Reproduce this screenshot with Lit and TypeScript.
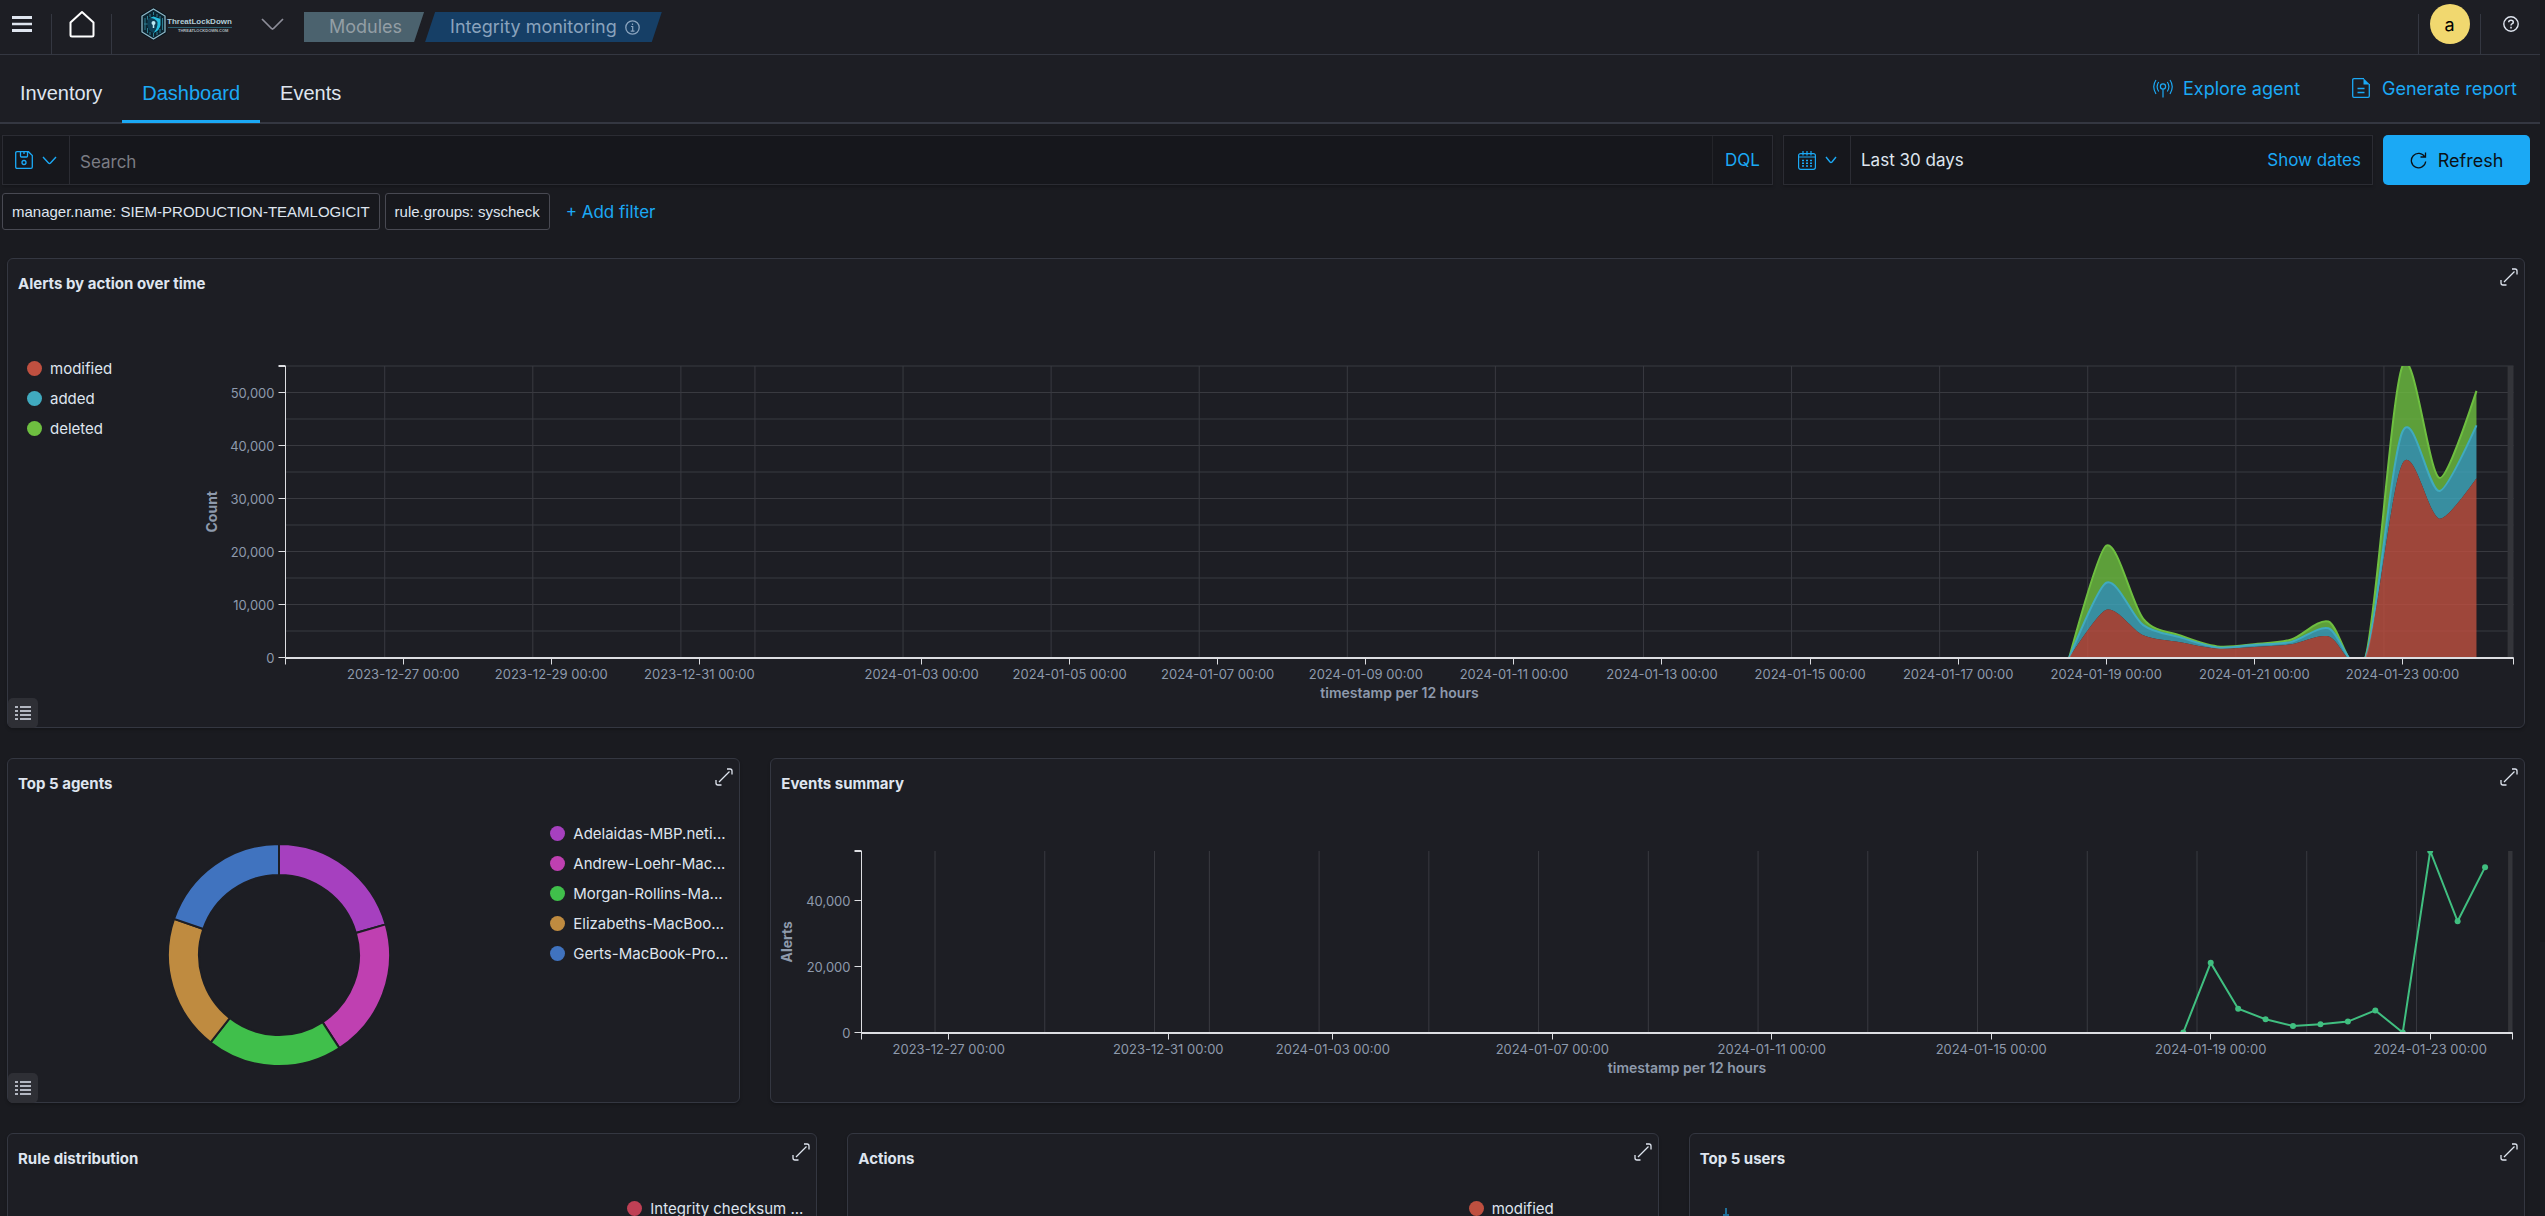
import { LitElement, html, svg, css, nothing } from "lit";
import { customElement, property, state } from "lit/decorators.js";

interface Tick {
  at: number;
  label: string;
}

interface Series {
  color: string;
  values: number[];
}

type Point = [number, number];

const DAY_MIN = -1.59;
const DAY_MAX = 28.5;
const PARTIAL_FROM = 28.42;
const MAX_COUNT = 55000;

/* Days are counted from 2023-12-27; one bucket every half day. */
const FIRST_BUCKET = 22.5;
const GRID_DAYS = [-0.25, 1.75, 3.75, ...Array.from({ length: 12 }, (_, i) => 4.75 + 2 * i)];

const dayLabel = (day: number): string => {
  const date = new Date(Date.UTC(2023, 11, 27 + day));
  return `${date.toISOString().slice(0, 10)} 00:00`;
};

const countLabel = (value: number): string => value.toLocaleString("en-US");

const ticksOf = (days: number[]): Tick[] => days.map((at) => ({ at, label: dayLabel(at) }));

/* Cardinal spline with tension 0.7. */
const cardinal = (p: Point[]): string => {
  const last = p.length - 1;
  const k = 0.15;
  const tangent = (i: number): Point => [k * (p[i + 1][0] - p[i - 1][0]), k * (p[i + 1][1] - p[i - 1][1])];
  let d = `M${p[0][0]},${p[0][1]}`;
  const first = tangent(1);
  d += `Q${p[1][0] - (first[0] * 2) / 3},${p[1][1] - (first[1] * 2) / 3} ${p[1][0]},${p[1][1]}`;
  for (let i = 1; i < last - 1; i++) {
    const a = tangent(i);
    const b = tangent(i + 1);
    d += `C${p[i][0] + a[0]},${p[i][1] + a[1]} ${p[i + 1][0] - b[0]},${p[i + 1][1] - b[1]} ${p[i + 1][0]},${p[i + 1][1]}`;
  }
  const end = tangent(last - 1);
  d += `Q${p[last - 1][0] + (end[0] * 2) / 3},${p[last - 1][1] + (end[1] * 2) / 3} ${p[last][0]},${p[last][1]}`;
  return d;
};

@customElement("time-chart")
export class TimeChart extends LitElement {
  @property() kind: "area" | "line" = "area";
  @property() valueTitle = "";
  @property({ type: Number }) height = 360;
  @property({ type: Number }) plotLeft = 85.5;
  @property({ type: Number }) plotRight = 10.5;
  @property({ type: Number }) plotTop = 16;
  @property({ type: Number }) plotBottom = 307.5;
  @property({ type: Number }) titleX = 11;
  @property({ type: Number }) valueStep = 10000;
  @property({ attribute: false }) ticks: Tick[] = [];
  @property({ attribute: false }) series: Series[] = [];
  @state() private width = 0;

  private observer = new ResizeObserver((entries) => {
    this.width = Math.round(entries[0].contentRect.width);
  });

  static styles = css`
    :host {
      display: block;
      min-width: 0;
      font-family: Inter, "Open Sans", sans-serif;
    }
    svg {
      display: block;
    }
    .grid {
      stroke: #393a40;
      stroke-width: 1;
      fill: none;
    }
    .axis {
      stroke: #dddee2;
      fill: none;
    }
    .thin {
      stroke-width: 1;
    }
    .thick {
      stroke-width: 2;
    }
    .label {
      font-size: 13px;
      fill: #8e9aac;
    }
    .title {
      font-size: 14px;
      font-weight: 600;
      fill: #8e9aac;
    }
    .side {
      font-weight: 700;
    }
    .partial {
      fill: #34353a;
    }
  `;

  connectedCallback() {
    super.connectedCallback();
    this.observer.observe(this);
  }

  disconnectedCallback() {
    this.observer.disconnect();
    super.disconnectedCallback();
  }

  private x(day: number): number {
    const span = this.width - this.plotRight - this.plotLeft;
    return this.plotLeft + ((day - DAY_MIN) / (DAY_MAX - DAY_MIN)) * span;
  }

  private y(value: number): number {
    return this.plotBottom - (value / MAX_COUNT) * (this.plotBottom - this.plotTop);
  }

  private points(values: number[]): Point[] {
    return values.map((v, i) => [this.x(FIRST_BUCKET + i / 2), this.y(v)]);
  }

  private renderArea() {
    return [...this.series].reverse().map((s, i, all) => {
      const pts = this.points(s.values);
      const lower = all[i + 1];
      const top = cardinal(pts);
      const end = pts[pts.length - 1];
      const under = lower
        ? "L" + cardinal([...this.points(lower.values)].reverse()).slice(1)
        : `L${end[0]},${this.plotBottom}L${pts[0][0]},${this.plotBottom}`;
      return svg`
        <path d=${top + under + "Z"} fill=${s.color} fill-opacity="0.8"></path>
        <path d=${top} fill="none" stroke=${s.color} stroke-width=${lower ? 2 : 0}></path>`;
    });
  }

  private renderLine() {
    return this.series.map((s) => {
      const pts = this.points(s.values);
      return svg`
        <polyline points=${pts.map((p) => p.join(",")).join(" ")} fill="none" stroke=${s.color} stroke-width="2"></polyline>
        ${pts.map((p) => svg`<circle cx=${p[0]} cy=${p[1]} r="3" fill=${s.color}></circle>`)}`;
    });
  }

  render() {
    if (!this.width) return nothing;
    const right = this.width - this.plotRight;
    const left = this.plotLeft;
    const bottom = this.plotBottom;
    const values: number[] = [];
    for (let v = 0; v <= MAX_COUNT; v += this.valueStep) values.push(v);
    const middle = (this.plotTop + bottom) / 2;
    return html`
      <svg width=${this.width} height=${this.height} role="img" aria-label="${this.valueTitle} by timestamp per 12 hours">
        <defs>
          <clipPath id="plot">
            <rect x=${left} y=${this.plotTop} width=${right - left} height=${bottom - this.plotTop}></rect>
          </clipPath>
        </defs>
        ${this.kind === "area"
          ? Array.from({ length: 11 }, (_, i) => this.y((i + 1) * 5000)).map(
              (y) => svg`<path class="grid" d="M${left},${y}H${right}"></path>`
            )
          : nothing}
        ${GRID_DAYS.map((d) => svg`<path class="grid" d="M${this.x(d)},${this.plotTop}V${bottom}"></path>`)}
        <rect class="partial" x=${this.x(PARTIAL_FROM)} y=${this.plotTop} width=${right - this.x(PARTIAL_FROM)} height=${bottom - this.plotTop}></rect>
        <g clip-path="url(#plot)">${this.kind === "area" ? this.renderArea() : this.renderLine()}</g>
        <path class="axis thin" d="M${left},${this.plotTop}V${bottom + 7}"></path>
        <path class="axis thick" d="M${left - 7},${this.plotTop}H${left}"></path>
        <path class="axis thick" d="M${left},${Math.ceil(bottom)}H${right}"></path>
        <path class="axis thin" d="M${right},${bottom}v7"></path>
        ${values.map(
          (v) => svg`
            <path class="axis thin" d="M${left - 7},${Math.floor(this.y(v)) + 0.5}H${left}"></path>
            <text class="label" x=${left - 11} y=${this.y(v)} text-anchor="end" dominant-baseline="central">${countLabel(v)}</text>`
        )}
        ${this.ticks.map(
          (t) => svg`
            <path class="axis thin" d="M${Math.floor(this.x(t.at)) + 0.5},${bottom}v7"></path>
            <text class="label" x=${this.x(t.at)} y=${bottom + 16} text-anchor="middle" dominant-baseline="central">${t.label}</text>`
        )}
        <text class="title" x=${(left + right) / 2} y=${bottom + 35} text-anchor="middle" dominant-baseline="central">timestamp per 12 hours</text>
        <text class="title side" transform="translate(${this.titleX},${middle}) rotate(-90)" text-anchor="middle" dominant-baseline="central">${this.valueTitle}</text>
      </svg>
    `;
  }
}

interface LegendItem {
  label: string;
  color: string;
}

const ACTIONS: LegendItem[] = [
  { label: "modified", color: "#bf5040" },
  { label: "added", color: "#40aabf" },
  { label: "deleted", color: "#6ebf40" },
];

const ACTION_SERIES: Series[] = [
  { color: "#bf5040", values: [0, 9000, 4200, 2900, 1700, 2000, 2500, 4000, 0, 36600, 26200, 33800] },
  { color: "#40aabf", values: [0, 14100, 6100, 3800, 1900, 2400, 2950, 5500, 0, 42600, 31400, 43800] },
  { color: "#6ebf40", values: [0, 21100, 7300, 4150, 2100, 2500, 3400, 6800, 0, 55000, 33900, 50300] },
];

const EVENT_SERIES: Series[] = [
  { color: "#40bf80", values: [0, 21100, 7200, 4000, 2000, 2500, 3300, 6700, 0, 55000, 33700, 50100] },
];

const AGENTS: (LegendItem & { until: number })[] = [
  { label: "Adelaidas-MBP.neti...", color: "#a640bf", until: 74 },
  { label: "Andrew-Loehr-Mac...", color: "#bf40b1", until: 147 },
  { label: "Morgan-Rollins-Ma...", color: "#40bf4b", until: 218 },
  { label: "Elizabeths-MacBoo...", color: "#bf8b40", until: 289 },
  { label: "Gerts-MacBook-Pro...", color: "#4073bf", until: 360 },
];

const slice = (from: number, to: number): string => {
  const at = (deg: number, r: number) => {
    const a = ((deg - 90) * Math.PI) / 180;
    return `${(111 + r * Math.cos(a)).toFixed(2)},${(111 + r * Math.sin(a)).toFixed(2)}`;
  };
  return `M${at(from, 111)}A111,111 0 0 1 ${at(to, 111)}L${at(to, 80)}A80,80 0 0 0 ${at(from, 80)}Z`;
};

const chevron = (w: number, h: number) => html`
  <svg class="stroke" width=${w} height=${h} viewBox="0 0 ${w} ${h}" aria-hidden="true">
    <path d="M1,1L${w / 2 - 1},${h - 2}Q${w / 2},${h - 1} ${w / 2 + 1},${h - 2}L${w - 1},1" stroke-width="1.4"></path>
  </svg>
`;

@customElement("app-root")
export class AppRoot extends LitElement {
  static styles = css`
    :host {
      display: flex;
      height: 100vh;
      overflow: hidden;
      background: #1a1b20;
      color: #dfe5ef;
      font-family: Inter, "Open Sans", sans-serif;
      font-size: 15px;
    }
    * {
      box-sizing: border-box;
    }
    button,
    input {
      font: inherit;
      color: inherit;
      background: none;
      border: 0;
      padding: 0;
      margin: 0;
    }
    button {
      cursor: pointer;
      display: flex;
      align-items: center;
    }
    a {
      color: inherit;
      text-decoration: none;
    }
    svg {
      display: block;
      flex: none;
    }
    .stroke {
      fill: none;
      stroke: currentColor;
    }
    .page {
      flex: 1;
      min-width: 0;
    }
    .scroll {
      flex: 0 0 5px;
    }
    .thumb {
      height: 77.5%;
      background: #17181c;
    }

    .header {
      display: flex;
      align-items: flex-start;
      height: 55px;
      background: #1d1e24;
      border-bottom: 1px solid #343741;
    }
    .cell {
      height: 40px;
      margin-top: 14px;
      border-right: 1px solid #343741;
      display: flex;
      justify-content: center;
    }
    .menu {
      width: 52px;
      padding-right: 7px;
      color: #dfe5ef;
    }
    .menu button {
      height: 20px;
    }
    .home {
      width: 60px;
      color: #ffffff;
    }
    .home a {
      margin-top: -4px;
    }
    .logo {
      display: flex;
      margin: 7px 0 0 28px;
    }
    .logo-name {
      font: 700 8px "Liberation Sans", sans-serif;
      fill: #b4cdd8;
    }
    .logo-site {
      font: 700 4px "Liberation Sans", sans-serif;
      fill: #b0b8be;
    }
    .spaces {
      margin: 18px 0 0 28px;
      color: #8d8d99;
    }
    .crumbs {
      display: flex;
      gap: 1px;
      margin: 12px 0 0 20px;
      padding: 0;
      list-style: none;
      font-size: 18px;
      line-height: 30px;
    }
    .crumb {
      display: flex;
      align-items: center;
      gap: 8px;
      height: 30px;
      padding: 0 22px 0 25px;
    }
    .crumb svg {
      margin-top: 1px;
    }
    .crumb-first {
      background: #4b626e;
      color: #939ea5;
      clip-path: polygon(0 0, 100% 0, calc(100% - 10px) 100%, 0 100%);
    }
    .crumb-last {
      background: #163f66;
      color: #8aa3bd;
      clip-path: polygon(10px 0, 100% 0, calc(100% - 10px) 100%, 0 100%);
    }
    .account {
      margin-left: auto;
      width: 63px;
      border-left: 1px solid #343741;
    }
    .avatar {
      width: 40px;
      height: 40px;
      margin-top: -10px;
      border-radius: 50%;
      background: #f1d86f;
      color: #000000;
      font-size: 18px;
      justify-content: center;
    }
    .help {
      width: 59px;
      height: 48px;
      justify-content: center;
    }

    .nav {
      display: flex;
      justify-content: space-between;
      height: 69px;
      padding-top: 8px;
      background: #1d1e24;
      box-shadow: inset 0 -2px #343741;
    }
    .tabs {
      display: flex;
    }
    .tab {
      height: 60px;
      padding: 3px 20px 0;
      border-bottom: 3px solid transparent;
      font: 20px "Liberation Sans", Arial, sans-serif;
    }
    .tab-on {
      color: #1ba9f5;
      border-bottom-color: #1ba9f5;
    }
    .links {
      display: flex;
      gap: 52px;
      height: 50px;
      padding-right: 23px;
      color: #1ba9f5;
      font-size: 18px;
    }
    .link {
      display: flex;
      align-items: center;
      gap: 10px;
    }

    .query {
      display: flex;
      gap: 10px;
      height: 61px;
      padding: 11px 10px 0 2px;
      font-size: 17px;
    }
    .box {
      display: flex;
      background: #16171c;
      border: 1px solid #2b2c33;
      box-shadow: 0 2px 3px #00000033;
    }
    .search {
      flex: 1;
      min-width: 0;
    }
    .dates {
      flex: 0 1 590px;
    }
    .picker {
      justify-content: center;
      gap: 9px;
      width: 67px;
      color: #1ba9f5;
      border-right: 1px solid #2b2c33;
    }
    .search input {
      flex: 1;
      min-width: 0;
      padding: 4px 10px 0;
      outline: none;
    }
    .search input::placeholder {
      color: #7b7c84;
      opacity: 1;
    }
    .language {
      width: 60px;
      justify-content: center;
      color: #1ba9f5;
      border-left: 1px solid #232429;
    }
    .range {
      flex: 1;
      padding-left: 10px;
    }
    .blue {
      color: #1ba9f5;
    }
    .show {
      padding-right: 11px;
    }
    .refresh {
      flex: 0 0 147px;
      justify-content: center;
      gap: 11px;
      border-radius: 5px;
      background: #1ba9f5;
      color: #0b1116;
      font-size: 18px;
    }

    .filters {
      display: flex;
      gap: 5px;
      padding: 8px 2px 28px;
    }
    .pill {
      height: 37px;
      padding: 0 9px;
      border: 1px solid #484952;
      border-radius: 3px;
      background: #17181d;
      font: 15px "Liberation Sans", Arial, sans-serif;
    }
    .add {
      margin-left: 11px;
      font-size: 17px;
    }

    .board {
      display: grid;
      gap: 30px;
      padding: 0 15px 0 7px;
    }
    .row {
      display: grid;
      gap: 30px;
    }
    .row-two {
      grid-template-columns: minmax(0, 733fr) minmax(0, 1754fr);
    }
    .row-three {
      grid-template-columns: minmax(0, 810fr) minmax(0, 811fr) minmax(0, 836fr);
    }
    .panel {
      position: relative;
      min-height: 345px;
      background: #1d1e24;
      border: 1px solid #343741;
      border-radius: 6px;
      box-shadow: 0 2px 3px #00000033;
    }
    .panel-tall {
      min-height: 470px;
    }
    .head {
      display: flex;
      justify-content: space-between;
      align-items: flex-start;
      height: 51px;
      padding: 9px 6px 0 10px;
    }
    .head h2 {
      margin: 0;
      padding-top: 5px;
      font-size: 15px;
      line-height: 22px;
      font-weight: 700;
    }
    .body {
      display: flex;
    }
    .body-tall {
      padding-top: 40px;
    }
    .grow {
      flex: 1;
    }
    .donut {
      display: flex;
      justify-content: center;
      padding-top: 34px;
    }
    .legend {
      flex: none;
      width: 189px;
      margin: 0;
      padding: 8px 0 0;
      list-style: none;
    }
    .legend-left {
      width: 192px;
      padding: 3px 0 0 19px;
    }
    .legend li {
      display: flex;
      align-items: center;
      gap: 8px;
      height: 30px;
      white-space: nowrap;
    }
    .list {
      position: absolute;
      left: 0;
      bottom: -1px;
      width: 30px;
      height: 30px;
      justify-content: center;
      border-radius: 5px;
      background: #2e2f35;
    }
    .bars {
      padding: 23px 0 0 32px;
    }
  `;

  private legend(items: LegendItem[], extra = "") {
    return html`
      <ul class="legend ${extra}">
        ${items.map(
          (item) => html`
            <li>
              <svg width="15" height="15" aria-hidden="true"><circle cx="7.5" cy="7.5" r="7.5" fill=${item.color}></circle></svg>
              ${item.label}
            </li>
          `
        )}
      </ul>
    `;
  }

  private head(title: string) {
    return html`
      <div class="head">
        <h2>${title}</h2>
        <button aria-label="Expand ${title}">
          <svg class="stroke" width="18" height="18" viewBox="0 0 18 18" aria-hidden="true">
            <path d="M4,14L14.5,3.5M12,1H15Q17,1 17,3V6.5M1,12V15Q1,17 3,17H6.5" stroke-width="1.3"></path>
          </svg>
        </button>
      </div>
    `;
  }

  private listButton() {
    return html`
      <button class="list" aria-label="Toggle legend">
        <svg class="stroke" width="16" height="14" viewBox="0 0 16 14" aria-hidden="true">
          <path d="M0,1H3M5,1H16M0,5H3M5,5H16M0,9H3M5,9H16M0,13H3M5,13H16" stroke-width="1.3"></path>
        </svg>
      </button>
    `;
  }

  private renderHeader() {
    return html`
      <header class="header">
        <div class="cell menu">
          <button aria-label="Menu">
            <svg width="20" height="16" fill="currentColor" aria-hidden="true">
              <path d="M0,0H20V3H0ZM0,6.7H20V9.3H0ZM0,13H20V16H0Z"></path>
            </svg>
          </button>
        </div>
        <div class="cell home">
          <a href="#home" aria-label="Home">
            <svg class="stroke" width="26" height="28" viewBox="0 0 26 28" aria-hidden="true">
              <path d="M1.5,12.5L13,2L24.5,12.5V25Q24.5,26.5 23,26.5H3Q1.5,26.5 1.5,25Z" stroke-width="2" stroke-linejoin="round"></path>
            </svg>
          </a>
        </div>
        <a class="logo" href="#overview" aria-label="ThreatLockDown">
          <svg width="93" height="34" viewBox="0 0 93 34" aria-hidden="true">
            <path d="M13.5,0.5L26.5,8V26L13.5,33.5L0.5,26V8Z" fill="#07141c"></path>
            <path d="M13.5,2L25,9V25L13.5,32L2,25V9Z" fill="#0b2430" stroke="#8fb8c8" stroke-width="1.3"></path>
            <path d="M5,11V23M7.5,9V13M7.5,21V26M10,7V10M10,25V28M13.5,5V8M13.5,26V30M17,7V10M17,25V28M20,9V12M20,22V26M22.5,11V23M4,17H8" stroke="#2f7f93" fill="none"></path>
            <path d="M13.5,9.5L20,12V18Q20,23 13.5,26Q7.5,23 7.5,18V12Z" fill="#0e3f55"></path>
            <path d="M13.5,9.5L20.5,12V18Q20,23 13.5,26Q18,21 17.5,15Q15,11 10,11Z" fill="#25bfe0"></path>
            <circle cx="13.5" cy="16" r="2" fill="#bdeaf4"></circle>
            <path d="M13.5,16V21" stroke="#bdeaf4" stroke-width="1.5"></path>
            <text class="logo-name" x="27" y="17">ThreatLockDown</text>
            <path d="M28,20.5H92" stroke="#2b5f70"></path>
            <text class="logo-site" x="38" y="25">THREATLOCKDOWN.COM</text>
          </svg>
        </a>
        <button class="spaces" aria-label="Switch view">
          <svg class="stroke" width="23" height="13" viewBox="0 0 23 13" aria-hidden="true">
            <path d="M1,1L10.5,10.5Q11.5,11.5 12.5,10.5L22,1" stroke-width="1.7"></path>
          </svg>
        </button>
        <ol class="crumbs">
          <li><a class="crumb crumb-first" href="#modules">Modules</a></li>
          <li class="crumb crumb-last">
            Integrity monitoring
            <svg class="stroke" width="15" height="15" viewBox="0 0 15 15" role="img" aria-label="About this module">
              <circle cx="7.5" cy="7.5" r="6.7" stroke-width="1.3"></circle>
              <path d="M6,6.5H7.7V11M5.7,11.2H9.5M7.5,3.5V5" stroke-width="1.2"></path>
            </svg>
          </li>
        </ol>
        <div class="cell account"><button class="avatar" aria-label="Account menu">a</button></div>
        <button class="help" aria-label="Help">
          <svg class="stroke" width="16" height="16" viewBox="0 0 16 16" aria-hidden="true">
            <circle cx="8" cy="8" r="7.2" stroke-width="1.4"></circle>
            <path d="M5.7,6.3Q5.8,4.2 8,4.2Q10.3,4.2 10.3,6.2Q10.3,7.3 8.9,7.9Q8,8.3 8,9.6M8,10.8V12.4" stroke-width="1.5"></path>
          </svg>
        </button>
      </header>
    `;
  }

  private renderNav() {
    return html`
      <nav class="nav">
        <div class="tabs" role="tablist">
          <button class="tab" role="tab" aria-selected="false">Inventory</button>
          <button class="tab tab-on" role="tab" aria-selected="true">Dashboard</button>
          <button class="tab" role="tab" aria-selected="false">Events</button>
        </div>
        <div class="links">
          <a class="link" href="#agents">
            <svg class="stroke" width="20" height="20" viewBox="0 0 20 20" aria-hidden="true">
              <path d="M3,2Q-1.5,8.5 3,16M17,2Q21.5,8.5 17,16M5.7,4Q2.5,8.5 5.7,13.5M14.3,4Q17.5,8.5 14.3,13.5M10,11.5V19.5" stroke-width="1.2"></path>
              <circle cx="10" cy="8.5" r="2.6" stroke-width="1.2"></circle>
            </svg>
            Explore agent
          </a>
          <a class="link" href="#report">
            <svg class="stroke" width="20" height="20" viewBox="0 0 20 20" aria-hidden="true">
              <path d="M12,0.7H2Q0.7,0.7 0.7,2V18Q0.7,19.3 2,19.3H16Q17.3,19.3 17.3,18V6M5.5,10.5H12.5M5.5,14.5H12.5" stroke-width="1.3"></path>
              <path d="M11.5,0.2L17.9,6.5H11.5Z" fill="currentColor" stroke="none"></path>
            </svg>
            Generate report
          </a>
        </div>
      </nav>
    `;
  }

  private renderQuery() {
    return html`
      <div class="query">
        <div class="box search">
          <button class="picker" aria-label="Saved queries">
            <svg class="stroke" width="18" height="18" viewBox="0 0 18 18" aria-hidden="true">
              <path d="M0.7,2Q0.7,0.7 2,0.7H13.5L17.3,4.5V16Q17.3,17.3 16,17.3H2Q0.7,17.3 0.7,16ZM5.5,1V5Q5.5,6 6.5,6H11.5Q12.5,6 12.5,5V1M9,1V3" stroke-width="1.3"></path>
              <circle cx="9" cy="11.5" r="2" stroke-width="1.3"></circle>
            </svg>
            ${chevron(15, 9)}
          </button>
          <input type="text" placeholder="Search" aria-label="Search" />
          <button class="language">DQL</button>
        </div>
        <div class="box dates">
          <button class="picker" aria-label="Quick time ranges">
            <svg class="stroke" width="18" height="19" viewBox="0 0 18 19" aria-hidden="true">
              <rect x="0.6" y="2.6" width="16.8" height="15.7" rx="2" stroke-width="1.2"></rect>
              <path d="M0.6,6H17.4M5,0V4.5M9,0V4.5M13,0V4.5" stroke-width="1.2"></path>
              <path d="M4,9.5H14M4,12.2H14M4,15H14" stroke-width="1.6" stroke-dasharray="2 2"></path>
            </svg>
            ${chevron(12, 8)}
          </button>
          <button class="range">Last 30 days</button>
          <button class="blue show">Show dates</button>
        </div>
        <button class="refresh">
          <svg class="stroke" width="17" height="17" viewBox="0 0 17 17" aria-hidden="true">
            <path d="M15.5,0.5V5H10.5M14.8,5A7.2,7.2 0 1 0 15.7,9.5" stroke-width="1.3"></path>
          </svg>
          Refresh
        </button>
      </div>
      <div class="filters">
        <button class="pill">manager.name: SIEM-PRODUCTION-TEAMLOGICIT</button>
        <button class="pill">rule.groups: syscheck</button>
        <button class="blue add">+ Add filter</button>
      </div>
    `;
  }

  private renderBoard() {
    return html`
      <main class="board">
        <section class="panel panel-tall">
          ${this.head("Alerts by action over time")}
          <div class="body body-tall">
            ${this.legend(ACTIONS, "legend-left")}
            <time-chart
              class="grow"
              kind="area"
              valueTitle="Count"
              .ticks=${ticksOf([0, 2, 4, 7, 9, 11, 13, 15, 17, 19, 21, 23, 25, 27])}
              .series=${ACTION_SERIES}
            ></time-chart>
          </div>
          ${this.listButton()}
        </section>
        <div class="row row-two">
          <section class="panel">
            ${this.head("Top 5 agents")}
            <div class="body">
              <div class="grow donut">
                <svg width="222" height="222" viewBox="0 0 222 222" role="img" aria-label="Top 5 agents">
                  ${AGENTS.map(
                    (a, i) => svg`<path d=${slice(i ? AGENTS[i - 1].until : 0, a.until)} fill=${a.color} stroke="#1d1e24" stroke-width="2"></path>`
                  )}
                </svg>
              </div>
              ${this.legend(AGENTS)}
            </div>
            ${this.listButton()}
          </section>
          <section class="panel">
            ${this.head("Events summary")}
            <time-chart
              kind="line"
              valueTitle="Alerts"
              height="290"
              plotLeft="90.5"
              plotRight="11.5"
              plotTop="41"
              plotBottom="222.5"
              titleX="15"
              valueStep="20000"
              .ticks=${ticksOf([0, 4, 7, 11, 15, 19, 23, 27])}
              .series=${EVENT_SERIES}
            ></time-chart>
          </section>
        </div>
        <div class="row row-three">
          <section class="panel">
            ${this.head("Rule distribution")}
            <div class="body">
              <div class="grow"></div>
              ${this.legend([{ label: "Integrity checksum ...", color: "#bf4055" }])}
            </div>
          </section>
          <section class="panel">
            ${this.head("Actions")}
            <div class="body">
              <div class="grow"></div>
              ${this.legend(ACTIONS)}
            </div>
          </section>
          <section class="panel">
            ${this.head("Top 5 users")}
            <div class="bars">
              <svg width="8" height="60" viewBox="0 0 8 60" aria-hidden="true">
                <path d="M3,0H5V6H7V60H1V6H3Z" fill="#1f6f99"></path>
              </svg>
            </div>
          </section>
        </div>
      </main>
    `;
  }

  render() {
    return html`
      <div class="page">${this.renderHeader()} ${this.renderNav()} ${this.renderQuery()} ${this.renderBoard()}</div>
      <div class="scroll"><div class="thumb"></div></div>
    `;
  }
}
